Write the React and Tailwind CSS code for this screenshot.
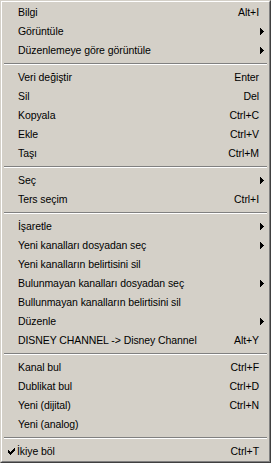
import React from "react";

const Arrow = () => (
  <svg width="4" height="7" viewBox="0 0 4 7" className="block" shapeRendering="crispEdges">
    <rect x="0" y="0" width="1" height="7" fill="#000" />
    <rect x="1" y="1" width="1" height="5" fill="#000" />
    <rect x="2" y="2" width="1" height="3" fill="#000" />
    <rect x="3" y="3" width="1" height="1" fill="#000" />
  </svg>
);

const Check = () => (
  <svg width="7" height="7" viewBox="0 0 7 7" className="block" shapeRendering="crispEdges">
    <rect x="0" y="2" width="1" height="3" fill="#000" />
    <rect x="1" y="3" width="1" height="3" fill="#000" />
    <rect x="2" y="4" width="1" height="3" fill="#000" />
    <rect x="3" y="3" width="1" height="3" fill="#000" />
    <rect x="4" y="2" width="1" height="3" fill="#000" />
    <rect x="5" y="1" width="1" height="3" fill="#000" />
    <rect x="6" y="0" width="1" height="3" fill="#000" />
  </svg>
);

const items = [
  { l: "Bilgi", s: "Alt+I" },
  { l: "Görüntüle", a: true },
  { l: "Düzenlemeye göre görüntüle", a: true },
  { sep: true },
  { l: "Veri değiştir", s: "Enter" },
  { l: "Sil", s: "Del" },
  { l: "Kopyala", s: "Ctrl+C" },
  { l: "Ekle", s: "Ctrl+V" },
  { l: "Taşı", s: "Ctrl+M" },
  { sep: true },
  { l: "Seç", a: true },
  { l: "Ters seçim", s: "Ctrl+I" },
  { sep: true },
  { l: "İşaretle", a: true },
  { l: "Yeni kanalları dosyadan seç", a: true },
  { l: "Yeni kanalların belirtisini sil" },
  { l: "Bulunmayan kanalları dosyadan seç", a: true },
  { l: "Bullunmayan kanalların belirtisini sil" },
  { l: "Düzenle", a: true },
  { l: "DISNEY CHANNEL -> Disney Channel", s: "Alt+Y" },
  { sep: true },
  { l: "Kanal bul", s: "Ctrl+F" },
  { l: "Dublikat bul", s: "Ctrl+D" },
  { l: "Yeni (dijital)", s: "Ctrl+N" },
  { l: "Yeni (analog)" },
  { sep: true },
  { l: "İkiye böl", s: "Ctrl+T", c: true },
];

export default function App() {
  return (
    <div
      className="w-[271px] h-[463px] bg-[#d4d0c8] border-l border-t border-r border-b border-l-[#d4d0c8] border-t-[#d4d0c8] border-r-[#404040] border-b-[#404040] overflow-hidden"
      style={{ fontFamily: '"Liberation Sans", Arial, sans-serif' }}
    >
      <div className="h-full border-l border-t border-r border-b border-l-white border-t-white border-r-[#808080] border-b-[#808080] pt-[1px] px-[1px] flex flex-col text-[10.5px] tracking-[-0.08px] text-black leading-none">
        {items.map((it, i) =>
          it.sep ? (
            <div key={i} className="h-[8px] shrink-0 flex flex-col justify-start pt-[3px] px-[1px]">
              <div className="h-[1px] bg-[#808080]" />
              <div className="h-[1px] bg-white" />
            </div>
          ) : (
            <div
              key={i}
              className={
                "h-[19px] flex items-center shrink-0 " +
                (it.c ? "pl-[5px] " : "pl-[15px] ") +
                (it.a ? "pr-[4px]" : "pr-[9px]")
              }
            >
              {it.c && (
                <span className="w-[9px] flex items-center">
                  <Check />
                </span>
              )}
              <span className="flex-1 whitespace-nowrap">{it.l}</span>
              {it.s && <span className="whitespace-nowrap">{it.s}</span>}
              {it.a && <Arrow />}
            </div>
          )
        )}
      </div>
    </div>
  );
}
